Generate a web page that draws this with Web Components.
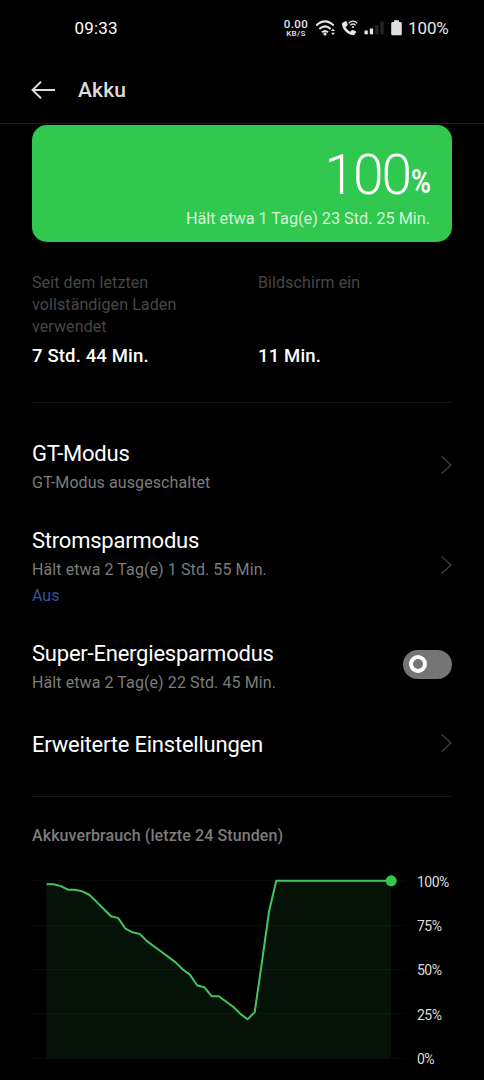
<!DOCTYPE html>
<html lang="de">
<head>
<meta charset="utf-8">
<title>Akku</title>
<style>
html,body{margin:0;background:#000;overflow:hidden}
body{width:484px;height:1080px;font-family:Roboto,"Liberation Sans",sans-serif;color:#fff}
</style>
</head>
<body>
<battery-screen></battery-screen>
<script>
const define = (name, html, init) => customElements.define(name, class extends HTMLElement {
  constructor() {
    super();
    const t = document.createElement('template');
    t.innerHTML = html;
    this.attachShadow({mode: 'open'}).append(t.content.cloneNode(true));
  }
  connectedCallback() { if (init) init.call(this); }
});

define('status-bar', `
<style>
:host{display:flex;align-items:center;height:56px;box-sizing:border-box;padding:0 34px 0 74.5px;color:#e6e6e6}
.time{font:400 17px/20px Roboto,sans-serif;letter-spacing:.2px;flex:1;color:#fff}
.icons{display:flex;align-items:center}
.rate{width:26px;margin-right:6px;text-align:center;font-weight:500;white-space:nowrap}
.rate div:first-child{font-size:11.5px;line-height:10px;letter-spacing:.4px}
.rate div:last-child{font-size:8px;line-height:9px;letter-spacing:.4px}
svg{display:block}
.pct{font-size:17px;line-height:20px;letter-spacing:-.1px;margin-left:5px;width:42px;white-space:nowrap}
</style>
<div class="time">09:33</div>
<div class="icons">
 <div class="rate"><div>0.00</div><div>KB/S</div></div>
 <svg width="88" height="20" viewBox="315 18 88 20">
  <g fill="none" stroke="#e6e6e6" stroke-width="2" stroke-linecap="butt">
   <path d="M316.3 25.5Q325 17.3 333.7 25.5"/>
   <path d="M319.3 29Q325 23.8 330.7 29"/>
   <path d="M322 32.3Q325 29.7 328 32.3"/>
  </g>
  <circle cx="325" cy="33.9" r="1.6" fill="#e6e6e6"/>
  <path d="M331 31L333 28.7L335 31ZM331 32.7L333 35L335 32.7Z" fill="#e6e6e6"/>
  <path d="M343 22.4L345.4 21.3C346.2 21 346.8 21.5 347 22.2L347.6 24.7C347.7 25.3 347.3 25.7 346.7 26.2L345.5 27.1C346.7 29.4 348.2 30.8 350.2 31.8L351.3 30.5C351.7 30 352.3 29.7 352.9 30L355.3 31C356.1 31.4 356.3 32 355.9 32.7L354.7 34.3C354 35.1 353 35.3 351.8 35C346.8 33.7 342.8 29.7 342 24.5C341.8 23.4 342.2 22.8 343 22.4Z" fill="#e6e6e6"/>
  <g fill="none" stroke="#e6e6e6" stroke-width="1.3"><path d="M348.7 23.2Q353 19 357.3 23.2M350.4 25.3Q353 22.8 355.6 25.3"/></g>
  <circle cx="353" cy="27" r="1.1" fill="#e6e6e6"/>
  <rect x="364.5" y="30.5" width="3.3" height="3.8" fill="#e6e6e6"/>
  <rect x="369.8" y="28.5" width="3.3" height="5.8" fill="#e6e6e6"/>
  <rect x="375.2" y="25" width="3.3" height="9.3" fill="#252525"/>
  <rect x="380.3" y="21.5" width="3.3" height="12.8" fill="#252525"/>
  <path d="M394 20.2h5v1.8h1.4q1.4 0 1.4 1.4v10.5q0 1.4-1.4 1.4h-7.8q-1.4 0-1.4-1.4v-10.5q0-1.4 1.4-1.4h1.4Z" fill="#dedede"/>
 </svg>
 <div class="pct">100%</div>
</div>`);

define('title-bar', `
<style>
:host{display:flex;align-items:center;height:68px;box-sizing:border-box;border-bottom:1px solid #1c1c1c;padding:1px 0 0 31px}
svg{display:block}
h1{margin:0 0 0 23px;font-size:21px;line-height:26px;font-weight:500;color:#dcdcdc;letter-spacing:.15px}
</style>
<svg width="24" height="20" viewBox="0 0 24 20" fill="none" stroke="#dcdcdc" stroke-width="1.9"><path d="M24 10H1.5M10 1.7L1.5 10L10 18.3"/></svg>
<h1><slot></slot></h1>`);

define('charge-card', `
<style>
:host{display:flex;flex-direction:column;align-items:flex-end;height:117px;box-sizing:border-box;margin:1px 0 0;padding:19px 21px 0 0;border-radius:15px;background:#30c84f}
.level{display:flex;align-items:baseline;height:64px;line-height:62px;font-size:55px;font-weight:300;white-space:nowrap;letter-spacing:-2px}
.level>span:first-child{margin-right:1px}
.unit{font-size:33px;font-weight:600;width:20px;letter-spacing:0;transform:translateY(-1.5px) scaleX(.82);transform-origin:0 50%}
.est{font-size:16.3px;line-height:22px;color:#d3f3da;white-space:nowrap;letter-spacing:-.03px;margin-right:1px}
</style>
<div class="level"><span><slot name="level"></slot></span><span class="unit">%</span></div>
<div class="est"><slot></slot></div>`);

define('usage-stat', `
<style>
:host{display:flex;flex-direction:column;justify-content:space-between}
.l{font-size:16px;line-height:22px;color:#474747;letter-spacing:.1px;max-width:170px}
.v{font-size:18.5px;line-height:24px;font-weight:500;color:#fff;white-space:nowrap;letter-spacing:.15px}
</style>
<div class="l"><slot></slot></div><div class="v"><slot name="value"></slot></div>`);

define('setting-row', `
<style>
:host{display:flex;align-items:center;justify-content:space-between}
.t{font-size:22px;line-height:28px;color:#fff;white-space:nowrap;letter-spacing:-.22px}
.s{font-size:16px;line-height:22px;color:#7c7c7c;white-space:nowrap;margin-top:4px;letter-spacing:.09px}
.x{font-size:16px;line-height:22px;color:#34549a;margin-top:4px}
.s:empty,.x:empty{display:none}
::slotted(*){margin-bottom:4px}
</style>
<div><div class="t"></div><div class="s"></div><div class="x"></div></div><slot></slot>`,
function () {
  this.shadowRoot.querySelector('.t').textContent = this.getAttribute('label');
  this.shadowRoot.querySelector('.s').textContent = this.getAttribute('detail') || '';
  this.shadowRoot.querySelector('.x').textContent = this.getAttribute('state') || '';
});

define('chevron-icon', `
<style>:host{display:block}svg{display:block}</style>
<svg width="12" height="20" viewBox="0 0 12 20" fill="none" stroke="#3c3c3c" stroke-width="1.5"><path d="M1.7 1.5L11 10L1.7 18.5"/></svg>`);

define('toggle-switch', `
<style>
:host{display:flex;align-items:center;width:49px;height:29px;box-sizing:border-box;padding-left:6px;border-radius:15px;background:#757575}
i{width:18px;height:18px;box-sizing:border-box;border:4px solid #fff;border-radius:50%}
</style><i></i>`);

define('usage-chart', `
<style>
:host{display:grid;grid-template-columns:372px auto;column-gap:13px}
svg{display:block}
.axis{display:flex;flex-direction:column;justify-content:space-between;height:193.5px;font-size:14px;line-height:16px;color:#dcdcdc;letter-spacing:-.5px;margin-top:.5px}
</style>
<svg width="372" height="195" viewBox="32 873 372 195">
 <g class="grid" stroke="#080a08" stroke-width="1"></g>
 <path class="area" fill="rgba(48,200,79,.09)"/>
 <path class="line" fill="none" stroke="#45c560" stroke-width="2" stroke-linejoin="round"/>
 <circle cx="391.2" cy="880.8" r="5.5" fill="#30c84f"/>
</svg>
<div class="axis"><span>100%</span><span>75%</span><span>50%</span><span>25%</span><span>0%</span></div>`,
function () {
  const levels = [98,98,97,95,95,94,92,88,84,80,79,73,71,70,66,63,60,57,54,50,47,41,40,35,35,32,29,25,22,26,54,83,100];
  while (levels.length < 49) levels.push(100);
  const y = p => 1058.3 - p * 1.775;
  const pts = levels.map((p, i) => (46.5 + i * 7.18).toFixed(1) + ' ' + y(p).toFixed(1)).join('L');
  const r = this.shadowRoot;
  r.querySelector('.line').setAttribute('d', 'M' + pts);
  r.querySelector('.area').setAttribute('d', 'M' + pts + 'V1058.3H46.5Z');
  r.querySelector('.grid').innerHTML = [0,25,50,75,100].map(p => {
    const v = Math.floor(y(p)) + .5;
    return '<path d="M32 ' + v + 'H404"/>';
  }).join('');
});

define('battery-screen', `
<style>
:host{display:flex;flex-direction:column;height:1080px;overflow:hidden;background:#000}
main{padding:0 32px}
.stats{display:grid;grid-template-columns:226px 1fr;height:96px;margin-top:30px}
hr{border:0;height:1px;background:#161616;margin:0}
.a{margin-top:34px}
.list{display:flex;flex-direction:column;margin-top:37px}
h2{margin:28px 0 26px;font-size:16px;line-height:22px;font-weight:500;color:#7c7c7c;white-space:nowrap;letter-spacing:.1px}
</style>
<status-bar></status-bar>
<title-bar>Akku</title-bar>
<main>
 <charge-card><span slot="level">100</span>Hält etwa 1 Tag(e) 23 Std. 25 Min.</charge-card>
 <section class="stats">
  <usage-stat>Seit dem letzten vollständigen Laden verwendet<span slot="value">7 Std. 44 Min.</span></usage-stat>
  <usage-stat>Bildschirm ein<span slot="value">11 Min.</span></usage-stat>
 </section>
 <hr class="a">
 <section class="list">
  <setting-row label="GT-Modus" detail="GT-Modus ausgeschaltet"><chevron-icon></chevron-icon></setting-row>
  <setting-row style="margin-top:33px" label="Stromsparmodus" detail="Hält etwa 2 Tag(e) 1 Std. 55 Min." state="Aus"><chevron-icon></chevron-icon></setting-row>
  <setting-row style="margin-top:33px" label="Super-Energiesparmodus" detail="Hält etwa 2 Tag(e) 22 Std. 45 Min."><toggle-switch style="margin-bottom:6px"></toggle-switch></setting-row>
  <setting-row style="margin-top:37px" label="Erweiterte Einstellungen"><chevron-icon></chevron-icon></setting-row>
 </section>
 <hr style="margin-top:37px">
 <h2>Akkuverbrauch (letzte 24 Stunden)</h2>
 <usage-chart></usage-chart>
</main>`);
</script>
</body>
</html>
